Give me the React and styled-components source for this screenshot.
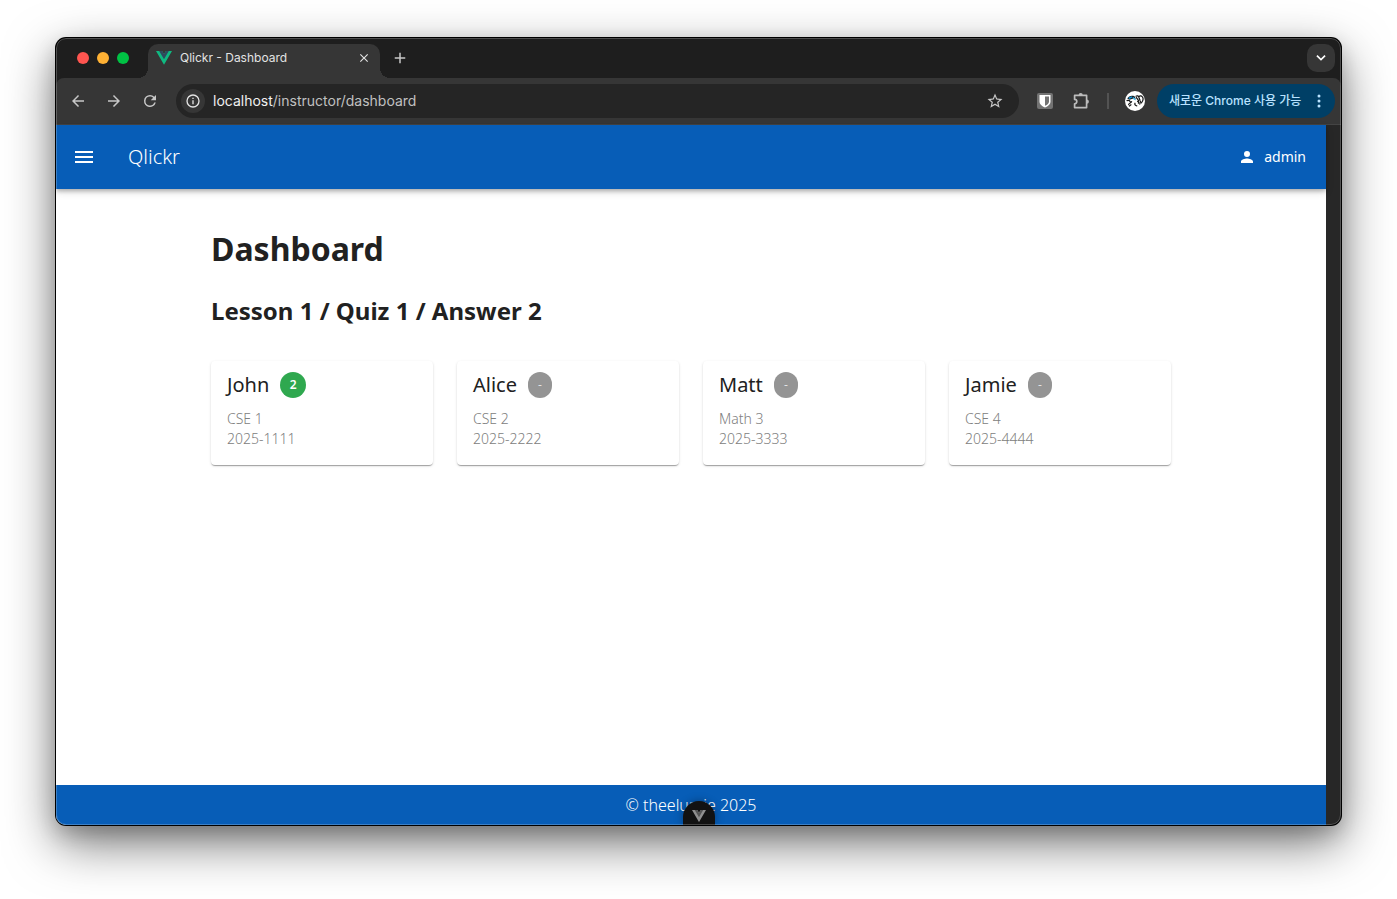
import React from "react";
import styled, { createGlobalStyle, css } from "styled-components";

const GlobalStyle = createGlobalStyle`
  *, *::before, *::after { box-sizing: border-box; }
  body { margin: 0; background: #fff; overflow: hidden; }
  button, input { font: inherit; color: inherit; }
  svg { display: block; flex: none; }
`;

const Desktop = styled.div`
  min-height: 100vh;
  padding: 38px 56px 74px;
  display: flex;
`;

const Window = styled.div`
  position: relative;
  flex: 1;
  min-width: 0;
  display: flex;
  flex-direction: column;
  border-radius: 10px;
  overflow: hidden;
  background: #1e1e1e;
  font-family: Inter, "Noto Sans CJK KR", sans-serif;
  box-shadow: 0 0 0 1px #000, 0 18px 50px rgba(0, 0, 0, 0.55), 0 8px 20px rgba(0, 0, 0, 0.18);

  &::after {
    content: "";
    position: absolute;
    inset: 0;
    border: 1px solid rgba(255, 255, 255, 0.22);
    border-radius: 10px;
    pointer-events: none;
  }
`;

const TabStrip = styled.div`
  height: 40px;
  display: flex;
  align-items: flex-end;
  padding: 0 6px 0 21px;
`;

const TrafficLights = styled.div`
  display: flex;
  gap: 8px;
  align-self: center;
  width: 71px;
`;

const Light = styled.button`
  width: 12px;
  height: 12px;
  padding: 0;
  border: 0;
  border-radius: 50%;
  background: ${(p) => p.$color};
`;

const IconButton = styled.button`
  display: grid;
  place-items: center;
  flex: none;
  width: ${(p) => p.$size || 28}px;
  height: ${(p) => p.$size || 28}px;
  padding: 0;
  border: 0;
  border-radius: ${(p) => p.$radius || "50%"};
  background: ${(p) => p.$bg || "transparent"};
  color: ${(p) => p.$color || "#c7c7c7"};
`;

const Tab = styled.div`
  position: relative;
  display: flex;
  align-items: center;
  gap: 8px;
  width: 232px;
  height: 34px;
  padding: 0 6px 6px 8px;
  border-radius: 10px 10px 0 0;
  background: #363636;
  color: #e3e3e3;
  font-size: 12px;
  line-height: 16px;

  &::before,
  &::after {
    content: "";
    position: absolute;
    bottom: 0;
    width: 10px;
    height: 10px;
  }
  &::before {
    right: 100%;
    background: radial-gradient(circle at 0 0, transparent 10px, #363636 10px);
  }
  &::after {
    left: 100%;
    background: radial-gradient(circle at 100% 0, transparent 10px, #363636 10px);
  }
`;

const TabTitle = styled.span`
  flex: 1;
  white-space: nowrap;
`;

const TabActions = styled.div`
  flex: 1;
  display: flex;
  justify-content: space-between;
  align-self: center;
  padding-left: 6px;
`;

const Toolbar = styled.div`
  height: 47px;
  display: flex;
  align-items: center;
  padding: 0 6px 0 8px;
  background: #363636;
  border-bottom: 1px solid #444;
  border-radius: 8px 8px 0 0;
`;

const NavButtons = styled.div`
  display: flex;
  gap: 8px;
  margin-right: 12px;
`;

const AddressBar = styled.form`
  flex: 1;
  min-width: 0;
  height: 34px;
  display: flex;
  align-items: center;
  gap: 8px;
  padding: 0 10px 0 5px;
  border-radius: 17px;
  background: #252525;
`;

const AddressField = styled.label`
  position: relative;
  flex: 1;
  height: 20px;
  font-size: 14px;
  line-height: 20px;
`;

const AddressInput = styled.input`
  width: 100%;
  height: 20px;
  padding: 0;
  border: 0;
  outline: 0;
  background: transparent;
  color: transparent;
  caret-color: #e3e3e3;
`;

const AddressText = styled.span`
  position: absolute;
  inset: 0;
  color: #c0c0c0;
  pointer-events: none;

  b {
    font-weight: 400;
    color: #f0f0f0;
  }
`;

const Extensions = styled.div`
  display: flex;
  align-items: center;
  gap: 8px;
  margin: 0 8px 0 12px;
`;

const Divider = styled.span`
  width: 2px;
  height: 16px;
  margin: 0 4px;
  background: #535353;
`;

const UpdateButton = styled.button`
  display: flex;
  align-items: center;
  justify-content: space-between;
  min-width: 178px;
  height: 34px;
  padding: 0 14px 0 12px;
  border: 0;
  border-radius: 17px;
  background: #003f66;
  color: #b9e2ff;
  font-size: 12px;
  font-weight: 500;
  line-height: 16px;
  white-space: nowrap;
`;

const Viewport = styled.div`
  position: relative;
  flex: 1;
  display: flex;
  background: #272727;
  padding-right: 15px;
`;

const Page = styled.div`
  flex: 1;
  min-width: 0;
  display: flex;
  flex-direction: column;
  background: #fff;
  color: #212121;
  font-family: "Noto Sans", "Noto Sans CJK KR", sans-serif;
  font-weight: 300;
`;

const AppBar = styled.header`
  height: 64px;
  display: flex;
  align-items: center;
  padding: 0 20px 0 4px;
  background: #075db7;
  color: #fff;
  box-shadow: 0 2px 4px rgba(0, 0, 0, 0.24), 0 3px 8px rgba(0, 0, 0, 0.14);
`;

const Brand = styled.a`
  margin-left: 20px;
  color: inherit;
  font-size: 20px;
  line-height: 28px;
  text-decoration: none;
`;

const UserButton = styled.button`
  display: flex;
  align-items: center;
  gap: 8px;
  margin-left: auto;
  padding: 0;
  border: 0;
  background: transparent;
  font-size: 14px;
  font-weight: 400;
  line-height: 20px;
`;

const Main = styled.main`
  flex: 1;
  width: 100%;
  max-width: 992px;
  margin: 0 auto;
  padding: 36px 16px;
`;

const Title = styled.h1`
  margin: 0 0 20px;
  font-size: 32px;
  font-weight: 700;
  line-height: 48px;
`;

const Subtitle = styled.h2`
  margin: 0 0 32px;
  font-size: 24px;
  font-weight: 700;
  line-height: 36px;
`;

const Students = styled.div`
  display: grid;
  grid-template-columns: repeat(4, 1fr);
  gap: 24px;
`;

const Card = styled.article`
  padding: 8px 16px 16px;
  border-radius: 4px;
  background: #fff;
  box-shadow: 0 2px 1px -1px rgba(0, 0, 0, 0.2), 0 1px 1px rgba(0, 0, 0, 0.14), 0 1px 3px rgba(0, 0, 0, 0.12);
`;

const CardHeader = styled.div`
  display: flex;
  align-items: center;
  gap: 11px;
  height: 32px;
  margin-bottom: 8px;
`;

const Name = styled.h3`
  margin: 0;
  font-size: 20px;
  font-weight: 400;
  line-height: 32px;
`;

const Badge = styled.span`
  display: grid;
  place-items: center;
  height: 26px;
  width: 24px;
  border-radius: 13px;
  background: #949494;
  color: #fff;
  font-size: 12px;
  line-height: 20px;
  ${(p) =>
    p.$answered &&
    css`
      width: 26px;
      background: #2fa84f;
      font-weight: 600;
    `}
`;

const Detail = styled.p`
  margin: 0;
  color: #808080;
  font-size: 14px;
  line-height: 20px;
`;

const Footer = styled.footer`
  height: 40px;
  display: grid;
  place-items: center;
  background: #075db7;
  color: #fff;
  font-size: 16px;
  line-height: 24px;
`;

const DevtoolsToggle = styled.button`
  position: absolute;
  left: 50%;
  bottom: 0;
  transform: translateX(-50%);
  width: 32px;
  height: 24px;
  display: grid;
  place-items: center;
  padding: 6px 0 0;
  border: 0;
  border-radius: 16px 16px 0 0;
  background: #121212;
  box-shadow: 0 0 8px rgba(0, 0, 0, 0.35);
`;

const Icon = ({ size = 20, d }) => (
  <svg width={size} height={size} viewBox="0 0 24 24" fill="currentColor" aria-hidden="true">
    <path d={d} />
  </svg>
);

const icons = {
  close: "M19 6.4 17.6 5 12 10.6 6.4 5 5 6.4l5.6 5.6L5 17.6 6.4 19l5.6-5.6 5.6 5.6 1.4-1.4-5.6-5.6z",
  plus: "M19 13h-6v6h-2v-6H5v-2h6V5h2v6h6z",
  chevron: "M6.8 7.6 12 12.6l5.2-5 1.8 1.8-7 6.8-7-6.8z",
  back: "M20 11H7.8l5.6-5.6L12 4l-8 8 8 8 1.4-1.4L7.8 13H20z",
  forward: "m12 4-1.4 1.4 5.6 5.6H4v2h12.2l-5.6 5.6L12 20l8-8z",
  reload:
    "M17.65 6.35A7.96 7.96 0 0 0 12 4a8 8 0 1 0 7.73 10h-2.08A6 6 0 1 1 12 6c1.66 0 3.14.69 4.22 1.78L13 11h7V4z",
  info: "M11 7h2v2h-2zm0 4h2v6h-2zm1-9a10 10 0 1 0 0 20 10 10 0 0 0 0-20m0 18a8 8 0 1 1 0-16 8 8 0 0 1 0 16",
  star: "m22 9.24-7.19-.62L12 2 9.19 8.63 2 9.24l5.46 4.73L5.82 21 12 17.27 18.18 21l-1.63-7.03zM12 15.4l-3.76 2.27 1-4.28-3.32-2.88 4.38-.38L12 6.1l1.71 4.04 4.38.38-3.32 2.88 1 4.28z",
  menu: "M3 18h18v-2H3zm0-5h18v-2H3zm0-7v2h18V6z",
  person: "M12 12a4 4 0 1 0 0-8 4 4 0 0 0 0 8m0 2c-2.67 0-8 1.34-8 4v2h16v-2c0-2.66-5.33-4-8-4",
};

const VueLogo = ({ width, outer, inner }) => (
  <svg width={width} viewBox="0 0 256 222" aria-hidden="true">
    <path fill={outer} d="M205 0h51L128 221 0 0h98l30 51 29-51z" />
    <path fill={inner} d="M50 0h48l30 53 29-53h48l-77 133z" />
  </svg>
);

const ShieldIcon = () => (
  <svg width="16" height="16" viewBox="0 0 16 16" aria-hidden="true">
    <rect width="16" height="16" rx="2" fill="#737373" />
    <path fill="#fff" d="M2.5 2h11v6.2c0 3.2-2.5 5-5.5 6.3-3-1.3-5.5-3.1-5.5-6.3z" />
    <path fill="#737373" d="M8 3.6h4v4.6c0 2.2-1.5 3.4-4 4.6z" />
  </svg>
);

const PuzzleIcon = () => (
  <svg width="20" height="20" viewBox="0 0 20 20" fill="none" aria-hidden="true">
    <path
      d="M3.6 4.4h12v12.2h-12v-3.8a2.2 2.2 0 0 0 0-4.4z"
      stroke="#bcbcbc"
      strokeWidth="1.7"
      strokeLinejoin="round"
    />
    <path d="M7.6 4.2a2.1 2.1 0 0 1 4.2 0zM15.8 8.6a2.1 2.1 0 0 1 0 4.2z" fill="#bcbcbc" />
  </svg>
);

const Avatar = () => (
  <svg width="20" height="20" viewBox="0 0 20 20" aria-hidden="true">
    <circle cx="10" cy="10" r="10" fill="#fff" />
    <path d="M2.2 7.6C3.6 5 6.4 4 9.6 5.2l1.2 3L8.4 7.6 4.6 8.8z" fill="#16242c" />
    <path d="M3.4 6.8 6.6 5.2l.6 1.4-2.8 1.4z" fill="#1597dc" />
    <path d="M7.6 6.2c2.2 0 3 1.4 3.2 3.2L8.4 8.2z" fill="#42b9ec" />
    <path
      d="M2 9.6c1.4-.4 2.6 0 3.2 1M6.6 10.6c-.6 1.6-2.6 1.2-3 3M4.4 15l1.6-1.2M10 12.2c-.6 1.2.4 2.6 1.8 2.6M11 5.2c1-.8 2.4-.4 2.8.8.4-1.2 2.4-1.6 3.4-.4 1.4 1.6.8 4.2-.8 6.2M11.4 6.6l2.4 3.2M13.6 5.6l1.4 3.6M12.6 10.4c.8.2 1.2 1 .8 1.8M15.4 10.4l-.6 2.8"
      fill="none"
      stroke="#161616"
      strokeWidth="1.2"
      strokeLinecap="round"
    />
  </svg>
);

const MoreIcon = () => (
  <svg width="4" height="16" viewBox="0 0 4 16" fill="currentColor" aria-hidden="true">
    <circle cx="2" cy="3" r="1.5" />
    <circle cx="2" cy="8" r="1.5" />
    <circle cx="2" cy="13" r="1.5" />
  </svg>
);

const students = [
  { name: "John", answer: "2", major: "CSE 1", id: "2025-1111" },
  { name: "Alice", major: "CSE 2", id: "2025-2222" },
  { name: "Matt", major: "Math 3", id: "2025-3333" },
  { name: "Jamie", major: "CSE 4", id: "2025-4444" },
];

export default function App() {
  return (
    <>
      <GlobalStyle />
      <Desktop>
        <Window>
          <TabStrip>
            <TrafficLights>
              <Light $color="#ff5550" aria-label="Close window" />
              <Light $color="#ffb134" aria-label="Minimize window" />
              <Light $color="#00c244" aria-label="Zoom window" />
            </TrafficLights>
            <Tab>
              <VueLogo width={16} outer="#10b981" inner="#2f495e" />
              <TabTitle>Qlickr - Dashboard</TabTitle>
              <IconButton $size={20} $color="#e3e3e3" aria-label="Close tab">
                <Icon size={14} d={icons.close} />
              </IconButton>
            </Tab>
            <TabActions>
              <IconButton aria-label="New tab">
                <Icon size={18} d={icons.plus} />
              </IconButton>
              <IconButton $bg="#363636" $radius="10px" $color="#fff" aria-label="Search tabs">
                <Icon size={16} d={icons.chevron} />
              </IconButton>
            </TabActions>
          </TabStrip>

          <Toolbar>
            <NavButtons>
              <IconButton aria-label="Back">
                <Icon size={18} d={icons.back} />
              </IconButton>
              <IconButton aria-label="Forward">
                <Icon size={18} d={icons.forward} />
              </IconButton>
              <IconButton aria-label="Reload">
                <Icon size={18} d={icons.reload} />
              </IconButton>
            </NavButtons>
            <AddressBar>
              <IconButton type="button" $size={24} $bg="#363636" $color="#e3e3e3" aria-label="Site information">
                <Icon size={16} d={icons.info} />
              </IconButton>
              <AddressField>
                <AddressInput aria-label="Address" defaultValue="localhost/instructor/dashboard" />
                <AddressText aria-hidden="true">
                  <b>localhost</b>/instructor/dashboard
                </AddressText>
              </AddressField>
              <IconButton type="button" aria-label="Bookmark this page">
                <Icon size={18} d={icons.star} />
              </IconButton>
            </AddressBar>
            <Extensions>
              <IconButton aria-label="Password manager">
                <ShieldIcon />
              </IconButton>
              <IconButton aria-label="Extensions">
                <PuzzleIcon />
              </IconButton>
              <Divider />
              <IconButton aria-label="Profile">
                <Avatar />
              </IconButton>
            </Extensions>
            <UpdateButton>
              새로운 Chrome 사용 가능
              <MoreIcon />
            </UpdateButton>
          </Toolbar>

          <Viewport>
            <Page>
              <AppBar>
                <IconButton $size={48} $color="#fff" aria-label="Menu">
                  <Icon size={24} d={icons.menu} />
                </IconButton>
                <Brand href="#">Qlickr</Brand>
                <UserButton>
                  <Icon size={18} d={icons.person} />
                  admin
                </UserButton>
              </AppBar>
              <Main>
                <Title>Dashboard</Title>
                <Subtitle>Lesson 1 / Quiz 1 / Answer 2</Subtitle>
                <Students>
                  {students.map((s) => (
                    <Card key={s.id}>
                      <CardHeader>
                        <Name>{s.name}</Name>
                        <Badge $answered={Boolean(s.answer)}>{s.answer || "-"}</Badge>
                      </CardHeader>
                      <Detail>{s.major}</Detail>
                      <Detail>{s.id}</Detail>
                    </Card>
                  ))}
                </Students>
              </Main>
              <Footer>© theelumie 2025</Footer>
            </Page>
            <DevtoolsToggle aria-label="Toggle devtools">
              <VueLogo width={14} outer="#8f8f8f" inner="#555" />
            </DevtoolsToggle>
          </Viewport>
        </Window>
      </Desktop>
    </>
  );
}
